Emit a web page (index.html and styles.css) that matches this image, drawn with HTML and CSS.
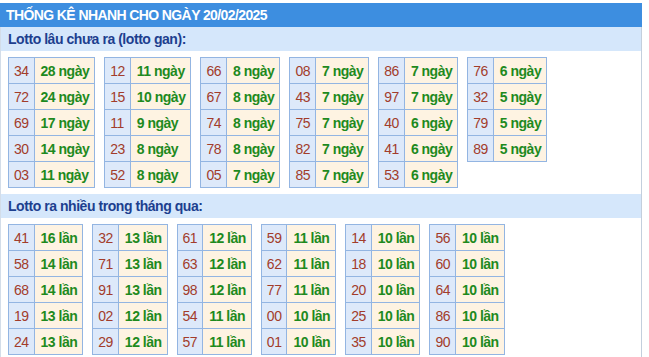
FILE: index.html
```html
<!DOCTYPE html>
<html lang="vi">
<head>
<meta charset="utf-8">
<title>Thống kê nhanh</title>
<link rel="stylesheet" href="styles.css">
</head>
<body>
<div class="box">
  <div class="title">THỐNG KÊ NHANH CHO NGÀY 20/02/2025</div>
  <div class="sub">Lotto lâu chưa ra (lotto gan):</div>
  <div class="grid">
    <table class="t"><tr><td class="n">34</td><td class="v">28 ngày</td></tr><tr><td class="n">72</td><td class="v">24 ngày</td></tr><tr><td class="n">69</td><td class="v">17 ngày</td></tr><tr><td class="n">30</td><td class="v">14 ngày</td></tr><tr><td class="n">03</td><td class="v">11 ngày</td></tr></table>
    <table class="t"><tr><td class="n">12</td><td class="v">11 ngày</td></tr><tr><td class="n">15</td><td class="v">10 ngày</td></tr><tr><td class="n">11</td><td class="v">9 ngày</td></tr><tr><td class="n">23</td><td class="v">8 ngày</td></tr><tr><td class="n">52</td><td class="v">8 ngày</td></tr></table>
    <table class="t"><tr><td class="n">66</td><td class="v">8 ngày</td></tr><tr><td class="n">67</td><td class="v">8 ngày</td></tr><tr><td class="n">74</td><td class="v">8 ngày</td></tr><tr><td class="n">78</td><td class="v">8 ngày</td></tr><tr><td class="n">05</td><td class="v">7 ngày</td></tr></table>
    <table class="t"><tr><td class="n">08</td><td class="v">7 ngày</td></tr><tr><td class="n">43</td><td class="v">7 ngày</td></tr><tr><td class="n">75</td><td class="v">7 ngày</td></tr><tr><td class="n">82</td><td class="v">7 ngày</td></tr><tr><td class="n">85</td><td class="v">7 ngày</td></tr></table>
    <table class="t"><tr><td class="n">86</td><td class="v">7 ngày</td></tr><tr><td class="n">97</td><td class="v">7 ngày</td></tr><tr><td class="n">40</td><td class="v">6 ngày</td></tr><tr><td class="n">41</td><td class="v">6 ngày</td></tr><tr><td class="n">53</td><td class="v">6 ngày</td></tr></table>
    <table class="t"><tr><td class="n">76</td><td class="v">6 ngày</td></tr><tr><td class="n">32</td><td class="v">5 ngày</td></tr><tr><td class="n">79</td><td class="v">5 ngày</td></tr><tr><td class="n">89</td><td class="v">5 ngày</td></tr></table>
  </div>
  <div class="sub">Lotto ra nhiều trong tháng qua:</div>
  <div class="grid">
    <table class="t"><tr><td class="n">41</td><td class="v">16 lần</td></tr><tr><td class="n">58</td><td class="v">14 lần</td></tr><tr><td class="n">68</td><td class="v">14 lần</td></tr><tr><td class="n">19</td><td class="v">13 lần</td></tr><tr><td class="n">24</td><td class="v">13 lần</td></tr></table>
    <table class="t"><tr><td class="n">32</td><td class="v">13 lần</td></tr><tr><td class="n">71</td><td class="v">13 lần</td></tr><tr><td class="n">91</td><td class="v">13 lần</td></tr><tr><td class="n">02</td><td class="v">12 lần</td></tr><tr><td class="n">29</td><td class="v">12 lần</td></tr></table>
    <table class="t"><tr><td class="n">61</td><td class="v">12 lần</td></tr><tr><td class="n">63</td><td class="v">12 lần</td></tr><tr><td class="n">98</td><td class="v">12 lần</td></tr><tr><td class="n">54</td><td class="v">11 lần</td></tr><tr><td class="n">57</td><td class="v">11 lần</td></tr></table>
    <table class="t"><tr><td class="n">59</td><td class="v">11 lần</td></tr><tr><td class="n">62</td><td class="v">11 lần</td></tr><tr><td class="n">77</td><td class="v">11 lần</td></tr><tr><td class="n">00</td><td class="v">10 lần</td></tr><tr><td class="n">01</td><td class="v">10 lần</td></tr></table>
    <table class="t"><tr><td class="n">14</td><td class="v">10 lần</td></tr><tr><td class="n">18</td><td class="v">10 lần</td></tr><tr><td class="n">20</td><td class="v">10 lần</td></tr><tr><td class="n">25</td><td class="v">10 lần</td></tr><tr><td class="n">35</td><td class="v">10 lần</td></tr></table>
    <table class="t"><tr><td class="n">56</td><td class="v">10 lần</td></tr><tr><td class="n">60</td><td class="v">10 lần</td></tr><tr><td class="n">64</td><td class="v">10 lần</td></tr><tr><td class="n">86</td><td class="v">10 lần</td></tr><tr><td class="n">90</td><td class="v">10 lần</td></tr></table>
  </div>
</div>
</body>
</html>
```
FILE: styles.css
```css
html, body {
  margin: 0;
  padding: 0;
  background: #ffffff;
}
body {
  font-family: "Liberation Sans", Arial, sans-serif;
  font-size: 14px;
}
.box {
  width: 640px;
  margin-top: 3px;
  border-left: 1px solid #d3dde9;
  border-right: 1px solid #c3cfdd;
}
.title {
  margin: 0 -1px 0 -1px;
  height: 24px;
  line-height: 24px;
  padding-left: 6px;
  background: #3d8ee0;
  color: #ffffff;
  font-weight: bold;
  font-size: 14px;
  letter-spacing: -0.6px;
}
.sub {
  height: 24px;
  line-height: 24px;
  padding-left: 7px;
  background: #d5e7fb;
  color: #1d3f8f;
  font-weight: bold;
  font-size: 14px;
  letter-spacing: -0.45px;
}
.grid {
  display: flex;
  flex-wrap: wrap;
  align-items: flex-start;
  gap: 9px;
  padding: 6px 7px 6px 7px;
}
.t {
  border-collapse: collapse;
}
.t td {
  border: 1px solid #93b5e2;
  height: 25px;
  padding: 0;
  white-space: nowrap;
  font-size: 14px;
  letter-spacing: -0.5px;
}
.t td.n {
  background: #dde9fa;
  color: #a23c2b;
  padding: 0 5px;
}
.t td.v {
  background: #fef3e2;
  color: #1e8a1e;
  font-weight: bold;
  padding: 0 5px 0 6px;
}
```
